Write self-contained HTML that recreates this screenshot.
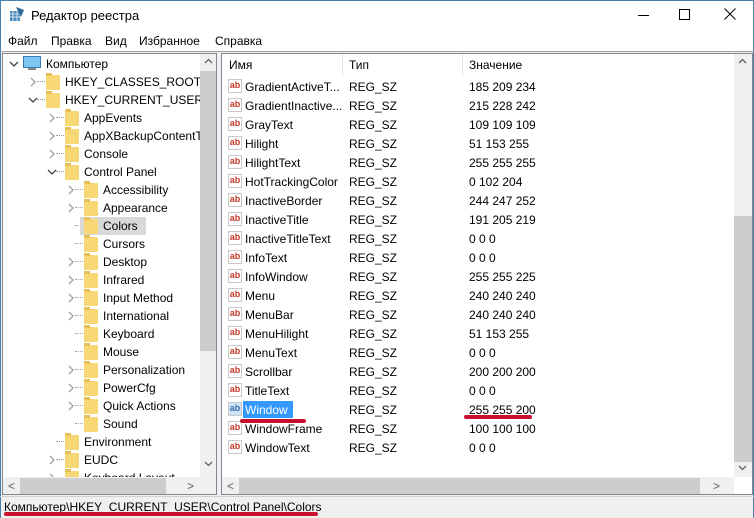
<!DOCTYPE html>
<html><head><meta charset="utf-8"><style>
*{margin:0;padding:0;box-sizing:border-box}
body{width:754px;height:518px;overflow:hidden;background:#f0f0f0;font-family:"Liberation Sans","DejaVu Sans",sans-serif;font-size:12px;color:#000;position:relative}
.abs{position:absolute}
.t{position:absolute;white-space:nowrap;line-height:16px}
.fold{position:absolute;width:14px;height:15px;background:#f8d775;border-radius:1px}
.fold:before{content:"";position:absolute;left:0;top:-2px;width:6px;height:3px;background:#e8c05a}
.ab{position:absolute;width:14px;height:14px;border:1px solid #c9c9c9;background:#fff;color:#c0392b;font-size:9px;font-weight:bold;line-height:11px;text-align:center}
.dot{position:absolute;border-top:1px dotted #a0a0a0;width:8px;height:0}
</style></head><body>
<div class="abs" style="left:0;top:0;width:754px;height:51px;background:#fff"></div>
<div class="abs" style="left:0;top:0;width:1px;height:518px;background:#4a7fb0"></div>
<div class="abs" style="left:753px;top:0;width:1px;height:518px;background:#4a7fb0"></div>
<div class="abs" style="left:0;top:0;width:754px;height:1px;background:#4a7fb0"></div>
<svg class="abs" style="left:9px;top:6px" width="16" height="16"><rect x="1" y="5" width="10" height="10" fill="#4a8fc0"/><path d="M1 8h10M1 11h10M4 5v10M8 5v10" stroke="#cde" stroke-width="1"/><path d="M7 1l8 3-3 7" fill="#2a6a9a"/></svg>
<div class="t" style="left:31px;top:8px;font-size:13px">Редактор реестра</div>
<div class="abs" style="left:638px;top:15px;width:11px;height:1px;background:#000"></div>
<div class="abs" style="left:679px;top:9px;width:11px;height:11px;border:1px solid #000"></div>
<svg class="abs" style="left:724px;top:8px" width="12" height="12"><path d="M0.5 0.5l11 11M11.5 0.5l-11 11" stroke="#000"/></svg>
<div class="t" style="left:8px;top:33px">Файл</div>
<div class="t" style="left:51px;top:33px">Правка</div>
<div class="t" style="left:105px;top:33px">Вид</div>
<div class="t" style="left:139px;top:33px">Избранное</div>
<div class="t" style="left:215px;top:33px">Справка</div>
<div class="abs" style="left:0;top:51px;width:754px;height:1px;background:#a0a0a0"></div>
<!-- left pane -->
<div class="abs" style="left:2px;top:53px;width:215px;height:442px;background:#fff;border:1px solid #828790;overflow:hidden">
<div id="tree"></div>
<div class="abs" style="left:197px;top:0;width:17px;height:423px;background:#f0f0f0"></div>
<div class="abs" style="left:197px;top:17px;width:17px;height:280px;background:#cdcdcd"></div>
<svg class="abs" style="left:201px;top:4px" width="9" height="6"><path d="M1 5l3.5-3.5L8 5" stroke="#606060" stroke-width="1.3" fill="none"/></svg>
<svg class="abs" style="left:201px;top:407px" width="9" height="6"><path d="M1 1l3.5 3.5L8 1" stroke="#606060" stroke-width="1.3" fill="none"/></svg>
<div class="abs" style="left:0;top:423px;width:214px;height:18px;background:#f0f0f0"></div>
<div class="abs" style="left:17px;top:424px;width:146px;height:16px;background:#cdcdcd"></div>
<div class="t" style="left:5px;top:424px;color:#606060">&lt;</div>
<div class="t" style="left:184px;top:424px;color:#606060">&gt;</div>
</div>
<!-- right pane -->
<div class="abs" style="left:221px;top:53px;width:532px;height:442px;background:#fff;border:1px solid #828790;overflow:hidden">
<div class="abs" style="left:120px;top:0;width:1px;height:22px;background:#e5e5e5"></div>
<div class="abs" style="left:240px;top:0;width:1px;height:22px;background:#e5e5e5"></div>
<div class="abs" style="left:512px;top:0;width:18px;height:423px;background:#f0f0f0"></div>
<div class="abs" style="left:512px;top:162px;width:18px;height:246px;background:#cdcdcd"></div>
<svg class="abs" style="left:516px;top:4px" width="9" height="6"><path d="M1 5l3.5-3.5L8 5" stroke="#606060" stroke-width="1.3" fill="none"/></svg>
<svg class="abs" style="left:516px;top:411px" width="9" height="6"><path d="M1 1l3.5 3.5L8 1" stroke="#606060" stroke-width="1.3" fill="none"/></svg>
<div class="abs" style="left:0;top:423px;width:512px;height:18px;background:#f0f0f0"></div>
<div class="abs" style="left:17px;top:424px;width:461px;height:16px;background:#cdcdcd"></div>
<div class="t" style="left:5px;top:424px;color:#606060">&lt;</div>
<div class="t" style="left:491px;top:424px;color:#606060">&gt;</div>
</div>
<div class="t" style="left:229px;top:57px">Имя</div>
<div class="t" style="left:349px;top:57px">Тип</div>
<div class="t" style="left:469px;top:57px">Значение</div>
<div id="list"></div>
<div class="abs" style="left:0;top:496px;width:754px;height:1px;background:#d0d0d0"></div>
<div class="t" style="left:4px;top:499px">Компьютер\HKEY_CURRENT_USER\Control Panel\Colors</div>
<div class="abs" style="left:4px;top:512px;width:314px;height:4px;background:#c8102e;border-radius:2px"></div>
<div class="abs" style="left:240px;top:419px;width:66px;height:4px;background:#c8102e;border-radius:2px"></div>
<div class="abs" style="left:464px;top:415px;width:68px;height:4px;background:#c8102e;border-radius:2px"></div>
<script>
var tree=[[0,"Компьютер","v",1],[1,"HKEY_CLASSES_ROOT",">"],[1,"HKEY_CURRENT_USER","v"],[2,"AppEvents",">"],[2,"AppXBackupContentType",">"],[2,"Console",">"],[2,"Control Panel","v"],[3,"Accessibility",">"],[3,"Appearance",">"],[3,"Colors","",0,1],[3,"Cursors",""],[3,"Desktop",">"],[3,"Infrared",">"],[3,"Input Method",">"],[3,"International",">"],[3,"Keyboard",""],[3,"Mouse",""],[3,"Personalization",">"],[3,"PowerCfg",">"],[3,"Quick Actions",">"],[3,"Sound",""],[2,"Environment",""],[2,"EUDC",">"],[2,"Keyboard Layout",">"]];
var h="";tree.forEach(function(r,i){var y=55+i*18-54,x=[8,27,46,65][r[0]]-3;
if(r[2]==">")h+='<svg class="abs" style="left:'+(x+3)+'px;top:'+(y+4)+'px" width="6" height="10"><path d="M1 1l4 4-4 4" stroke="#a0a0a0" stroke-width="1.3" fill="none"/></svg>';
if(r[2]=="v")h+='<svg class="abs" style="left:'+(x+1)+'px;top:'+(y+6)+'px" width="10" height="6"><path d="M1 1l4 4 4-4" stroke="#444" stroke-width="1.3" fill="none"/></svg>';
if(r[0]>0)h+='<div class="dot" style="left:'+(x+10)+'px;top:'+(y+8)+'px"></div>';
if(r[3])h+='<div class="abs" style="left:20px;top:'+(y+1)+'px;width:18px;height:12px;background:#7fc6f0;border:1px solid #3a7bb8"></div><div class="abs" style="left:25px;top:'+(y+13)+'px;width:8px;height:2px;background:#888"></div>';
else{if(r[4])h+='<div class="abs" style="left:'+(x+15)+'px;top:'+(y)+'px;width:'+(r[1].length*7+24)+'px;height:18px;background:#d9d9d9"></div>';
h+='<div class="fold" style="left:'+(x+19)+'px;top:'+(y+2)+'px"></div>';}
h+='<div class="t" style="left:'+(r[3]?43:x+38)+'px;top:'+(y+1)+'px">'+r[1]+'</div>';});
document.getElementById("tree").outerHTML=h;
var L=[["GradientActiveT...","185 209 234"],["GradientInactive...","215 228 242"],["GrayText","109 109 109"],["Hilight","51 153 255"],["HilightText","255 255 255"],["HotTrackingColor","0 102 204"],["InactiveBorder","244 247 252"],["InactiveTitle","191 205 219"],["InactiveTitleText","0 0 0"],["InfoText","0 0 0"],["InfoWindow","255 255 225"],["Menu","240 240 240"],["MenuBar","240 240 240"],["MenuHilight","51 153 255"],["MenuText","0 0 0"],["Scrollbar","200 200 200"],["TitleText","0 0 0"],["Window","255 255 200"],["WindowFrame","100 100 100"],["WindowText","0 0 0"]];
var g="";L.forEach(function(r,i){var y=77+i*19,s=r[0]=="Window";
g+='<div class="ab" style="left:228px;top:'+(y+2)+'px;'+(s?'background:#cce4f7;color:#3a6ea5':'')+'">ab</div>';
if(s)g+='<div class="abs" style="left:243px;top:'+(y+1)+'px;width:50px;height:17px;background:#3399ff"></div>';
g+='<div class="t" style="left:245px;top:'+(y+2)+'px;'+(s?'color:#fff':'')+'">'+r[0]+'</div><div class="t" style="left:349px;top:'+(y+2)+'px">REG_SZ</div><div class="t" style="left:469px;top:'+(y+2)+'px">'+r[1]+'</div>';});
document.getElementById("list").outerHTML=g;
</script>
</body></html>
